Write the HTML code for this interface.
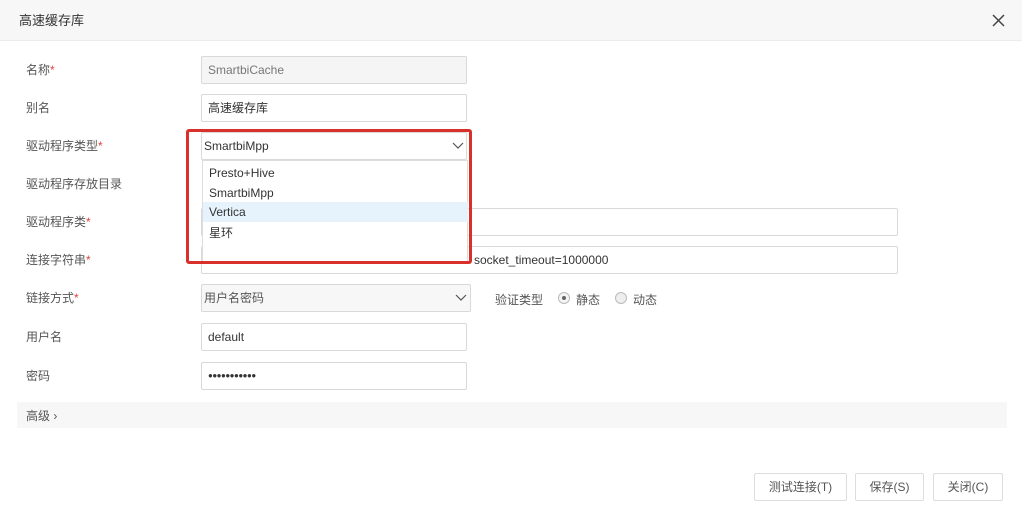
<!DOCTYPE html>
<html><head><meta charset="utf-8"><style>
*{box-sizing:border-box;margin:0;padding:0}
body{width:1022px;height:521px;background:#fff;font-family:"Liberation Sans","Noto Sans CJK SC",sans-serif;font-size:12px;color:#333;position:relative;overflow:hidden}
.abs{position:absolute}
.hdr{left:0;top:0;width:1022px;height:41px;background:#f7f7f7;border-bottom:1px solid #ececec}
.lbl{left:26px;color:#555;font-size:12px;line-height:16px}
.lbl i{color:#e0443e;font-style:normal}
.inp{left:201px;width:266px;height:28px;border:1px solid #d9d9d9;border-radius:2px;background:#fff;padding-left:6px;line-height:26px;font-size:12px;color:#333}
.btn{top:473px;height:28px;border:1px solid #ddd;border-radius:2px;background:#fff;text-align:center;line-height:26px;color:#555}
.item{left:203px;width:265px;height:20px;line-height:20px;padding-left:6px;font-size:12px;color:#333}
</style></head><body>
<div class="abs hdr"></div>
<div class="abs" style="left:19px;top:10px;font-size:13px;color:#333">高速缓存库</div>
<svg class="abs" style="left:992px;top:14px" width="13" height="13"><path d="M1 1L12 12M12 1L1 12" stroke="#444" stroke-width="1.5"/></svg>

<div class="abs lbl" style="top:62px">名称<i>*</i></div>
<div class="abs inp" style="top:56px;background:#f5f5f5;color:#777">SmartbiCache</div>
<div class="abs lbl" style="top:100px">别名</div>
<div class="abs inp" style="top:94px">高速缓存库</div>
<div class="abs lbl" style="top:138px">驱动程序类型<i>*</i></div>
<div class="abs inp" style="top:132px;padding-left:2px">SmartbiMpp</div>
<svg class="abs" style="left:452px;top:142px" width="12" height="8"><path d="M1 1L6 6L11 1" stroke="#555" fill="none" stroke-width="1.2"/></svg>
<div class="abs lbl" style="top:176px">驱动程序存放目录</div>
<div class="abs lbl" style="top:214px">驱动程序类<i>*</i></div>
<div class="abs inp" style="top:208px;width:697px"></div>
<div class="abs lbl" style="top:252px">连接字符串<i>*</i></div>
<div class="abs inp" style="top:246px;width:697px"><span style="position:absolute;left:272px">socket_timeout=1000000</span></div>
<div class="abs lbl" style="top:290px">链接方式<i>*</i></div>
<div class="abs inp" style="top:284px;width:270px;background:#f7f7f7;padding-left:2px;color:#555">用户名密码</div>
<svg class="abs" style="left:455px;top:294px" width="12" height="8"><path d="M1 1L6 6L11 1" stroke="#555" fill="none" stroke-width="1.2"/></svg>
<div class="abs" style="left:495px;top:291px;color:#555">验证类型</div>
<div class="abs" style="left:558px;top:292px;width:12px;height:12px;border:1px solid #bbb;border-radius:50%;background:#f4f4f4"><div style="margin:3px;width:4px;height:4px;border-radius:50%;background:#666"></div></div>
<div class="abs" style="left:576px;top:291px;color:#555">静态</div>
<div class="abs" style="left:615px;top:292px;width:12px;height:12px;border:1px solid #bbb;border-radius:50%;background:#eee"></div>
<div class="abs" style="left:633px;top:291px;color:#555">动态</div>
<div class="abs lbl" style="top:329px">用户名</div>
<div class="abs inp" style="top:323px">default</div>
<div class="abs lbl" style="top:368px">密码</div>
<div class="abs inp" style="top:362px;font-size:8px;letter-spacing:-0.5px">●●●●●●●●●●●</div>
<div class="abs" style="left:17px;top:402px;width:990px;height:26px;background:#f7f7f7"></div>
<div class="abs" style="left:26px;top:407px;color:#555">高级 ›</div>

<div class="abs" style="left:202px;top:160px;width:266px;height:103px;background:#fff;border:1px solid #ddd"></div>
<div class="abs item" style="top:163px">Presto+Hive</div>
<div class="abs item" style="top:183px">SmartbiMpp</div>
<div class="abs item" style="top:202px;background:#e6f2fc">Vertica</div>
<div class="abs item" style="top:223px">星环</div>
<div class="abs" style="left:186px;top:129px;width:286px;height:135px;border:3px solid #d9302c;border-radius:3px"></div>

<div class="abs btn" style="left:754px;width:93px">测试连接(T)</div>
<div class="abs btn" style="left:855px;width:69px">保存(S)</div>
<div class="abs btn" style="left:933px;width:70px">关闭(C)</div>
</body></html>
